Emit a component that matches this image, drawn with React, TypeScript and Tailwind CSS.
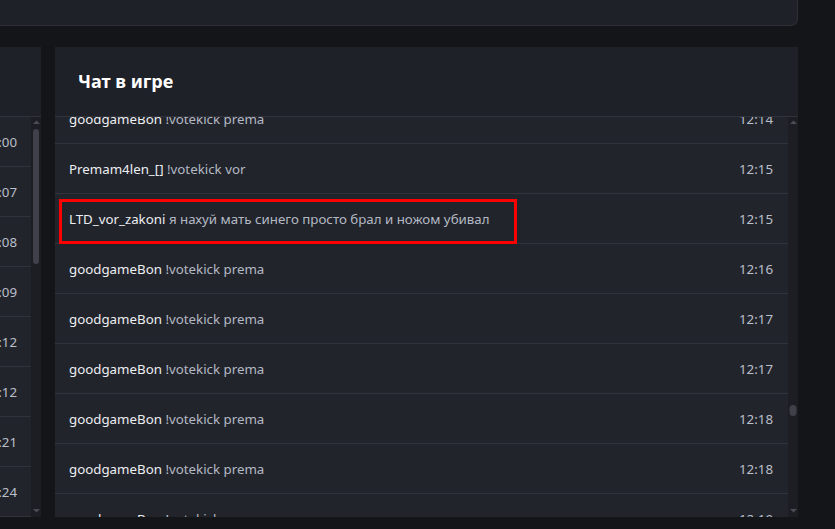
import React from "react";

const font = { fontFamily: '"Noto Sans", "Open Sans", Arial, sans-serif' };

type Msg = { name: string; text: string; time: string; mark?: boolean };

const msgs: Msg[] = [
  { name: "goodgameBon", text: "!votekick prema", time: "12:14" },
  { name: "Premam4len_[]", text: "!votekick vor", time: "12:15" },
  { name: "LTD_vor_zakoni", text: "я нахуй мать синего просто брал и ножом убивал", time: "12:15", mark: true },
  { name: "goodgameBon", text: "!votekick prema", time: "12:16" },
  { name: "goodgameBon", text: "!votekick prema", time: "12:17" },
  { name: "goodgameBon", text: "!votekick prema", time: "12:17" },
  { name: "goodgameBon", text: "!votekick prema", time: "12:18" },
  { name: "goodgameBon", text: "!votekick prema", time: "12:18" },
  { name: "goodgameBon", text: "!votekick prema", time: "12:19" },
];

const leftTimes = ["12:00", "12:07", "12:08", "12:09", "12:12", "12:12", "12:21", "12:24", "12:25"];

function Scrollbar({ thumbTop, thumbH, thumbW }: { thumbTop: number; thumbH: number; thumbW: number }) {
  return (
    <div className="relative w-[10px] shrink-0 bg-[#1c1e24]">
      <svg className="absolute left-[2px] top-[3px]" width="7" height="5" viewBox="0 0 7 5">
        <path d="M0 4 L3.5 0.5 L7 4 Z" fill="#4a4d56" />
      </svg>
      <div
        className="absolute left-1/2 -translate-x-1/2 rounded-full bg-[#3e4149]"
        style={{ top: thumbTop, height: thumbH, width: thumbW }}
      />
      <svg className="absolute left-[2px] bottom-[4px]" width="7" height="5" viewBox="0 0 7 5">
        <path d="M0 1 L3.5 4.5 L7 1 Z" fill="#4a4d56" />
      </svg>
    </div>
  );
}

export default function App() {
  return (
    <div className="w-[835px] h-[529px] overflow-hidden bg-[#141519]" style={font}>
      <div className="h-[26px] w-[798px] rounded-br-[7px] border-b border-r border-[#2c2f37] bg-[#1f2128]" />
      <div className="mt-[21px] flex gap-[14px]">
        {/* left panel */}
        <div className="flex h-[470px] w-[41px] flex-col bg-[#1f2128]">
          <div className="h-[70px] shrink-0 border-b border-[#30333b]" />
          <div className="flex min-h-0 flex-1">
            <div className="w-[31px] overflow-hidden">
              {leftTimes.map((t, i) => (
                <div
                  key={i}
                  className="flex h-[50px] items-center justify-end overflow-hidden whitespace-nowrap border-b border-[#30333b] bg-[#22242c] pr-[14px] pt-[2px] text-[13.3px] text-[#b9bfc9]"
                >
                  {t}
                </div>
              ))}
            </div>
            <Scrollbar thumbTop={12} thumbH={135} thumbW={6} />
          </div>
        </div>
        {/* right panel */}
        <div className="flex h-[470px] w-[743px] flex-col bg-[#1f2128]">
          <div className="flex h-[70px] shrink-0 items-center border-b border-[#30333b] px-[23px]">
            <span className="text-[18px] font-bold text-white">Чат в игре</span>
          </div>
          <div className="flex min-h-0 flex-1">
            <div className="flex-1 overflow-hidden bg-[#22242c]">
              <div className="-mt-[23px]">
                {msgs.map((m, i) => (
                  <div
                    key={i}
                    className="relative flex h-[50px] items-center justify-between border-b border-[#30333b] pl-[14px] pr-[15px] pt-[2px] text-[13.3px]"
                  >
                    <span className="whitespace-nowrap">
                      <span className="text-[#eceef1]">{m.name}</span>{" "}
                      <span className="text-[#b3b9c3]">{m.text}</span>
                    </span>
                    <span className="text-[#b9bfc9]">{m.time}</span>
                    {m.mark && (
                      <div className="absolute left-[4px] top-[5px] h-[45px] w-[458px] border-[3px] border-[#ff0000]" />
                    )}
                  </div>
                ))}
              </div>
            </div>
            <Scrollbar thumbTop={288} thumbH={11} thumbW={7} />
          </div>
        </div>
      </div>
    </div>
  );
}
